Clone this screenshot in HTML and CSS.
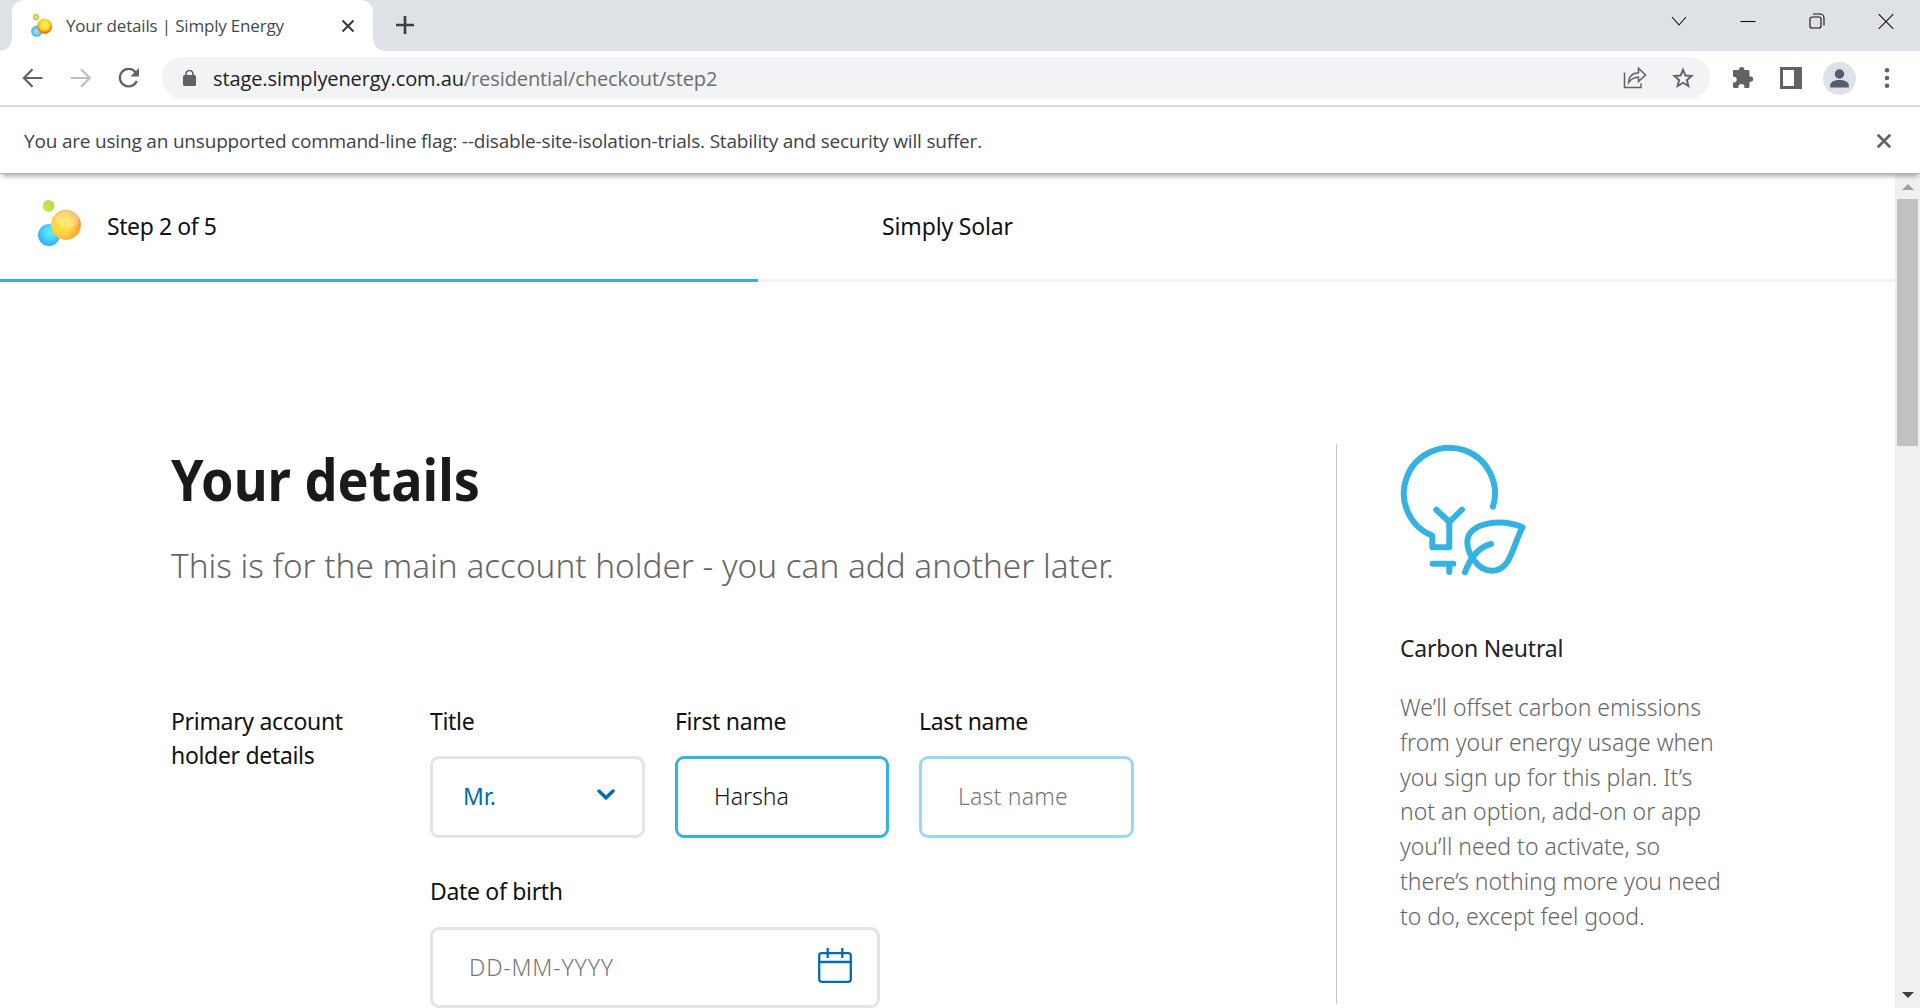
FILE: index.html
```html
<!DOCTYPE html>
<html lang="en">
<head>
<meta charset="utf-8">
<title>Your details | Simply Energy</title>
<link rel="stylesheet" href="styles.css">
</head>
<body>
<div class="window">
  <div class="tabstrip">
    <div class="tab">
      <svg class="favicon" width="22" height="24" viewBox="0 0 22 24">
        <defs>
          <radialGradient id="fg"><stop offset="0" stop-color="#e4ee90"/><stop offset="1" stop-color="#b2c832"/></radialGradient>
          <radialGradient id="fb"><stop offset="0" stop-color="#b5e8ff"/><stop offset="1" stop-color="#43b2ea"/></radialGradient>
          <radialGradient id="fo" cy=".4"><stop offset="0" stop-color="#fff36a"/><stop offset=".65" stop-color="#fbdc20"/><stop offset="1" stop-color="#ee7a1c"/></radialGradient>
        </defs>
        <circle cx="5" cy="3.2" r="3.1" fill="url(#fg)"/>
        <circle cx="5.6" cy="17.3" r="5.5" fill="url(#fb)"/>
        <circle cx="13.6" cy="12.3" r="7.6" fill="url(#fo)"/>
      </svg>
      <span class="tab-title">Your details | Simply Energy</span>
      <svg class="tab-close" width="12" height="12" viewBox="0 0 12 12"><path d="M.5 .5l11 11M11.500 .5l-11 11" stroke="#3c4043" stroke-width="2.200"/></svg>
    </div>
    <svg class="new-tab" width="18" height="18" viewBox="0 0 18 18"><path d="M9 0v18M0 9h18" stroke="#3c4043" stroke-width="2.700"/></svg>
    <div class="window-buttons">
      <svg width="16" height="16" viewBox="0 0 16 16"><path d="M1 4l7 8L15 4"/></svg>
      <svg width="16" height="16" viewBox="0 0 16 16"><path d="M.5 8.500h15"/></svg>
      <svg width="16" height="16" viewBox="0 0 16 16"><rect x="1" y="4" width="11" height="11" rx="2"/><path d="M4 1h7a4 4 0 0 1 4 4v7.500"/></svg>
      <svg width="16" height="16" viewBox="0 0 16 16"><path d="M.7 1.200l14.600 14.600M15.300 1.200L.7 15.800"/></svg>
    </div>
  </div>

  <div class="toolbar">
    <div class="nav">
      <svg width="22" height="20" viewBox="0 0 22 20"><path d="M20.500 10H2M10.500 1.200L1.800 10l8.700 8.800" fill="none" stroke="#5f6368" stroke-width="2.200"/></svg>
      <svg width="22" height="20" viewBox="0 0 22 20"><path d="M1 10h18.500M11 1.200l8.700 8.800-8.700 8.800" fill="none" stroke="#bcbec0" stroke-width="2.200"/></svg>
      <svg width="22" height="20" viewBox="0 0 22 20"><path d="M17.600 4.200A8.800 8.800 0 1 0 18.800 13" fill="none" stroke="#5f6368" stroke-width="2.300"/><path d="M21 0v8.600h-8.600z" fill="#5f6368"/></svg>
    </div>
    <div class="omnibox">
      <svg width="13" height="16" viewBox="0 0 13 16"><rect x="0" y="5" width="13" height="11" rx="1.500" fill="#5f6368"/><path d="M3 6V4a3.500 3.500 0 0 1 7 0v2" fill="none" stroke="#5f6368" stroke-width="1.700"/></svg>
      <span class="url"><span class="host">stage.simplyenergy.com.au</span>/residential/checkout/step2</span>
      <svg class="share" width="24" height="22" viewBox="0 0 24 22" fill="none" stroke="#5f6368" stroke-width="1.500"><path d="M1.500 5.500v15h16.500v-4"/><path d="M5.500 15.500C6 9.500 9.500 6 15.500 5.800V1.200L22.600 8l-7.100 6.600v-4.400C11 10.200 8 12 5.500 15.500z"/></svg>
      <svg class="star" width="22" height="22" viewBox="0 0 22 22"><path d="M11 2.800l2.400 5.700 6.200.5-4.700 4 1.500 6-5.400-3.200L5.600 19l1.500-6-4.700-4 6.200-.5z" fill="none" stroke="#5f6368" stroke-width="1.900"/></svg>
    </div>
    <div class="actions">
      <svg width="22" height="22" viewBox="0 0 22 22"><path d="M2 2.900h5V2.700a2.700 2.700 0 0 1 5.400 0v.2H16a1.500 1.500 0 0 1 1.500 1.500v5h1a2.700 2.700 0 0 1 0 5.400h-1v4.700A1.500 1.500 0 0 1 16 21h-3.600v-1a3 3 0 0 0-6 0v1H2.500A1.500 1.500 0 0 1 1 19.500v-4h.8a2.900 2.900 0 0 0 0-5.800H1V4a1.100 1.100 0 0 1 1-1.100z" fill="#5f6368"/></svg>
      <svg width="22" height="22" viewBox="0 0 22 22"><path d="M0 0h22v22H0zM3 3v16h11V3z" fill="#5f6368" fill-rule="evenodd"/></svg>
      <svg width="33" height="33" viewBox="0 0 33 33"><circle cx="16.500" cy="16.500" r="16.500" fill="#dee1e6"/><circle cx="16.500" cy="12" r="4.700" fill="#525d70"/><path d="M7.200 25.500v-2.300c0-3.400 5-5.200 9.300-5.200s9.300 1.800 9.300 5.200v2.300z" fill="#525d70"/></svg>
      <svg width="6" height="20" viewBox="0 0 6 20" fill="#5f6368"><circle cx="3" cy="2.300" r="2.300"/><circle cx="3" cy="10" r="2.300"/><circle cx="3" cy="17.700" r="2.300"/></svg>
    </div>
  </div>

  <div class="infobar">
    <span>You are using an unsupported command-line flag: --disable-site-isolation-trials. Stability and security will suffer.</span>
    <svg width="14" height="14" viewBox="0 0 14 14"><path d="M1.500 1.500l11 11M12.500 1.500l-11 11" stroke="#5f6368" stroke-width="2.700" stroke-linecap="round"/></svg>
  </div>

  <div class="viewport">
    <div class="page">
      <header class="header">
        <div class="steps">
          <svg width="44" height="46" viewBox="0 0 44 46">
            <defs>
              <linearGradient id="lg" x1="1" y1="0" x2="0" y2="1"><stop offset="0" stop-color="#b3d32c"/><stop offset="1" stop-color="#d2ec74"/></linearGradient>
              <radialGradient id="lb" cx=".55" cy=".4" r=".62"><stop offset="0" stop-color="#62edff"/><stop offset=".4" stop-color="#4fdcff"/><stop offset="1" stop-color="#2fa8fb"/></radialGradient>
              <radialGradient id="lo" cx=".38" cy=".5" r=".66"><stop offset="0" stop-color="#ffe53e"/><stop offset=".5" stop-color="#ffd243"/><stop offset="1" stop-color="#f6923a"/></radialGradient>
            </defs>
            <circle cx="10.500" cy="6" r="6" fill="url(#lg)"/>
            <circle cx="11" cy="35" r="11" fill="url(#lb)"/>
            <circle cx="28" cy="25" r="15" fill="url(#lo)"/>
            <ellipse cx="29" cy="19.500" rx="11.500" ry="8.500" fill="#fff" opacity=".28"/>
          </svg>
          <span>Step 2 of 5</span>
        </div>
        <span class="plan">Simply Solar</span>
      </header>
      <div class="progress"><div class="progress-fill" style="width:40%"></div></div>

      <div class="content">
        <main class="details">
          <h1>Your details</h1>
          <p class="lead">This is for the main account holder - you can add another later.</p>
          <div class="form-row">
            <h2 class="label section">Primary account<br>holder details</h2>
            <div class="fields">
              <div class="field">
                <span class="label">Title</span>
                <div class="box select"><span>Mr.</span><svg width="18" height="12" viewBox="0 0 18 12"><path d="M2 2l7 6.800L16 2" fill="none" stroke="#006bb6" stroke-width="3.400" stroke-linecap="round"/></svg></div>
              </div>
              <div class="field">
                <span class="label">First name</span>
                <div class="box active">Harsha</div>
              </div>
              <div class="field">
                <span class="label">Last name</span>
                <div class="box focused">Last name</div>
              </div>
              <div class="field dob">
                <span class="label">Date of birth</span>
                <div class="box date"><span>DD-MM-YYYY</span><svg width="34" height="36" viewBox="0 0 34 36" fill="none" stroke="#006bb6" stroke-width="2.300"><rect x="1.200" y="5.200" width="31.600" height="28.600" rx="2.500"/><path d="M1 14h32M9.700 0v10M24.300 0v10"/></svg></div>
              </div>
            </div>
          </div>
        </main>
        <aside class="benefit">
          <svg width="128" height="132" viewBox="0 0 128 132" fill="none" stroke="#34b2e2" stroke-width="6" stroke-linecap="round" stroke-linejoin="round">
            <path d="M93 62.700A45.600 45.600 0 1 0 32.300 91.700V103.300H49.300V77.500"/>
            <path d="M36.300 65.700L49.300 78L62 65.700M32.600 119.700H53.300M49.300 119.700V128"/>
            <path d="M122.500 83.300C101 74 67.300 78.500 67.300 98C67.300 108 76.500 126.700 91.500 126.700C111 126.700 112 103 122.500 83.300z"/>
            <path d="M65 128.300C70 115 78 103 91 100"/>
          </svg>
          <h3>Carbon Neutral</h3>
          <p>We’ll offset carbon emissions<br>from your energy usage when<br>you sign up for this plan. It’s<br>not an option, add-on or app<br>you’ll need to activate, so<br>there’s nothing more you need<br>to do, except feel good.</p>
        </aside>
      </div>
    </div>
    <div class="scrollbar">
      <div class="arrow up"></div>
      <div class="thumb"></div>
      <div class="arrow down"></div>
    </div>
  </div>
</div>
</body>
</html>
```
FILE: styles.css
```css
* { box-sizing: border-box; }
body { margin: 0; font-family: "Noto Sans", sans-serif; background: #fff; }
svg { display: block; flex: none; }
h1, h2, h3, p { margin: 0; font-weight: 400; }

.window { display: flex; flex-direction: column; width: 1920px; height: 1008px; overflow: hidden; }
.tabstrip, .toolbar, .infobar { font-family: "Open Sans", sans-serif; white-space: nowrap; flex: none; }

.tabstrip { display: flex; height: 51px; padding-left: 12px; background: #dee1e6; }
.tab { position: relative; display: flex; align-items: center; width: 361px; background: #fff; border-radius: 12px 12px 0 0; padding: 0 19px 0 19px; }
/* flared feet on both sides of the active tab */
.tab::before, .tab::after { content: ""; position: absolute; bottom: 0; width: 12px; height: 12px; }
.tab::before { right: 100%; background: radial-gradient(circle at 0 0, transparent 11.5px, #fff 12px); }
.tab::after { left: 100%; background: radial-gradient(circle at 100% 0, transparent 11.5px, #fff 12px); }
.tab-title { margin-left: 13px; font-size: 17px; letter-spacing: -.18px; color: #45494d; flex: 1; }
.new-tab { margin: 16px 0 0 23px; }
.window-buttons { display: flex; margin: 13px 26px 0 auto; gap: 53px; }
.window-buttons svg { fill: none; stroke: #111; stroke-width: 1.1; }

.toolbar { display: flex; align-items: center; height: 56px; padding: 0 30px 0 22px; border-bottom: 2px solid #dadce0; }
.nav { display: flex; gap: 26px; }
.omnibox { display: flex; align-items: center; width: 1548px; height: 42px; margin-left: 22px; padding: 0 16px 0 21px; border-radius: 21px; background: #f1f3f4; }
.url { flex: 1; margin-left: 17px; font-size: 20px; letter-spacing: -.1px; color: #6b6e72; }
.host { color: #202124; }
.share { margin-right: 25px; }
.actions { display: flex; align-items: center; margin-left: 22px; gap: 26px; flex: 1; }
.actions svg:nth-child(3) { margin-left: -5px; }
.actions svg:nth-child(4) { margin-left: auto; }

.infobar { position: relative; display: flex; align-items: center; justify-content: space-between; height: 67px; padding: 1px 29px 0 24px; border-bottom: 1px solid #b4b6b6; font-size: 19px; letter-spacing: -.19px; color: #3f4246; background: #fff; box-shadow: 0 4px 5px -2px rgba(0, 0, 0, .35); }

.viewport { display: flex; flex: 1; min-height: 0; }
.page { width: 1895px; overflow: hidden; }
.header { display: grid; grid-template-columns: 1fr auto 1fr; align-items: center; height: 105px; padding: 0 38px 1px; font-size: 23px; color: #111; }
.steps { display: flex; align-items: center; gap: 25px; letter-spacing: -.42px; }
.steps svg { margin-top: -7px; }
.plan { letter-spacing: -.15px; }
.progress { height: 3px; background: #f2f2f2; }
.progress-fill { height: 3px; background: #33b2df; }

.content { display: flex; padding: 162px 0 0 171px; }
.details { width: 1165px; }
.details h1 { width: max-content; font-size: 58px; line-height: 70px; font-weight: 700; color: #1a1a1a; transform: scaleX(.9); transform-origin: 0 0; }
.lead { margin-top: 29px; font-size: 33.3px; line-height: 44px; font-weight: 300; color: #666; }
.label { display: block; font-size: 23px; line-height: 34px; letter-spacing: -.32px; color: #111; }
.form-row { display: flex; margin-top: 117px; }
.section { width: 259px; }
.fields { display: grid; grid-template-columns: 215px 214px 215px; column-gap: 30px; row-gap: 36px; }
.dob { grid-column: span 3; width: 450px; }
.box { display: flex; align-items: center; height: 82px; margin-top: 18px; padding: 0 0 2px 36px; border: 3px solid #e4e4e4; border-radius: 9px; font-size: 23px; font-weight: 300; color: #111; }
.select { padding: 0 27px 2px 30px; justify-content: space-between; font-weight: 400; color: #006bb6; }
.select svg { margin-top: -3px; }
.active { border-color: #34b2e0; }
.focused { border-color: #99d9f0; color: #777; letter-spacing: .2px; }
.date { height: 81px; margin-top: 19px; padding-right: 25px; justify-content: space-between; color: #777; letter-spacing: .8px; }
.date svg { margin-top: -2px; }

.benefit { height: 560px; padding-left: 63px; border-left: 1px solid #c4c4c4; white-space: nowrap; }
.benefit h3 { margin-top: 55px; font-size: 23px; line-height: 34px; letter-spacing: -.2px; color: #222; }
.benefit p { margin-top: 25px; font-size: 23px; line-height: 34.8px; font-weight: 300; color: #666; }

.scrollbar { display: flex; flex-direction: column; align-items: center; width: 25px; padding: 10px 0; background: #f0f0f0; }
.arrow { width: 0; border: 6px solid transparent; }
.up { border-top: 0; border-bottom-color: #a0a0a0; }
.down { border-bottom: 0; border-top-color: #404040; margin-top: auto; }
.thumb { width: 21px; height: 247px; margin-top: 9px; background: #c1c1c1; }
```
